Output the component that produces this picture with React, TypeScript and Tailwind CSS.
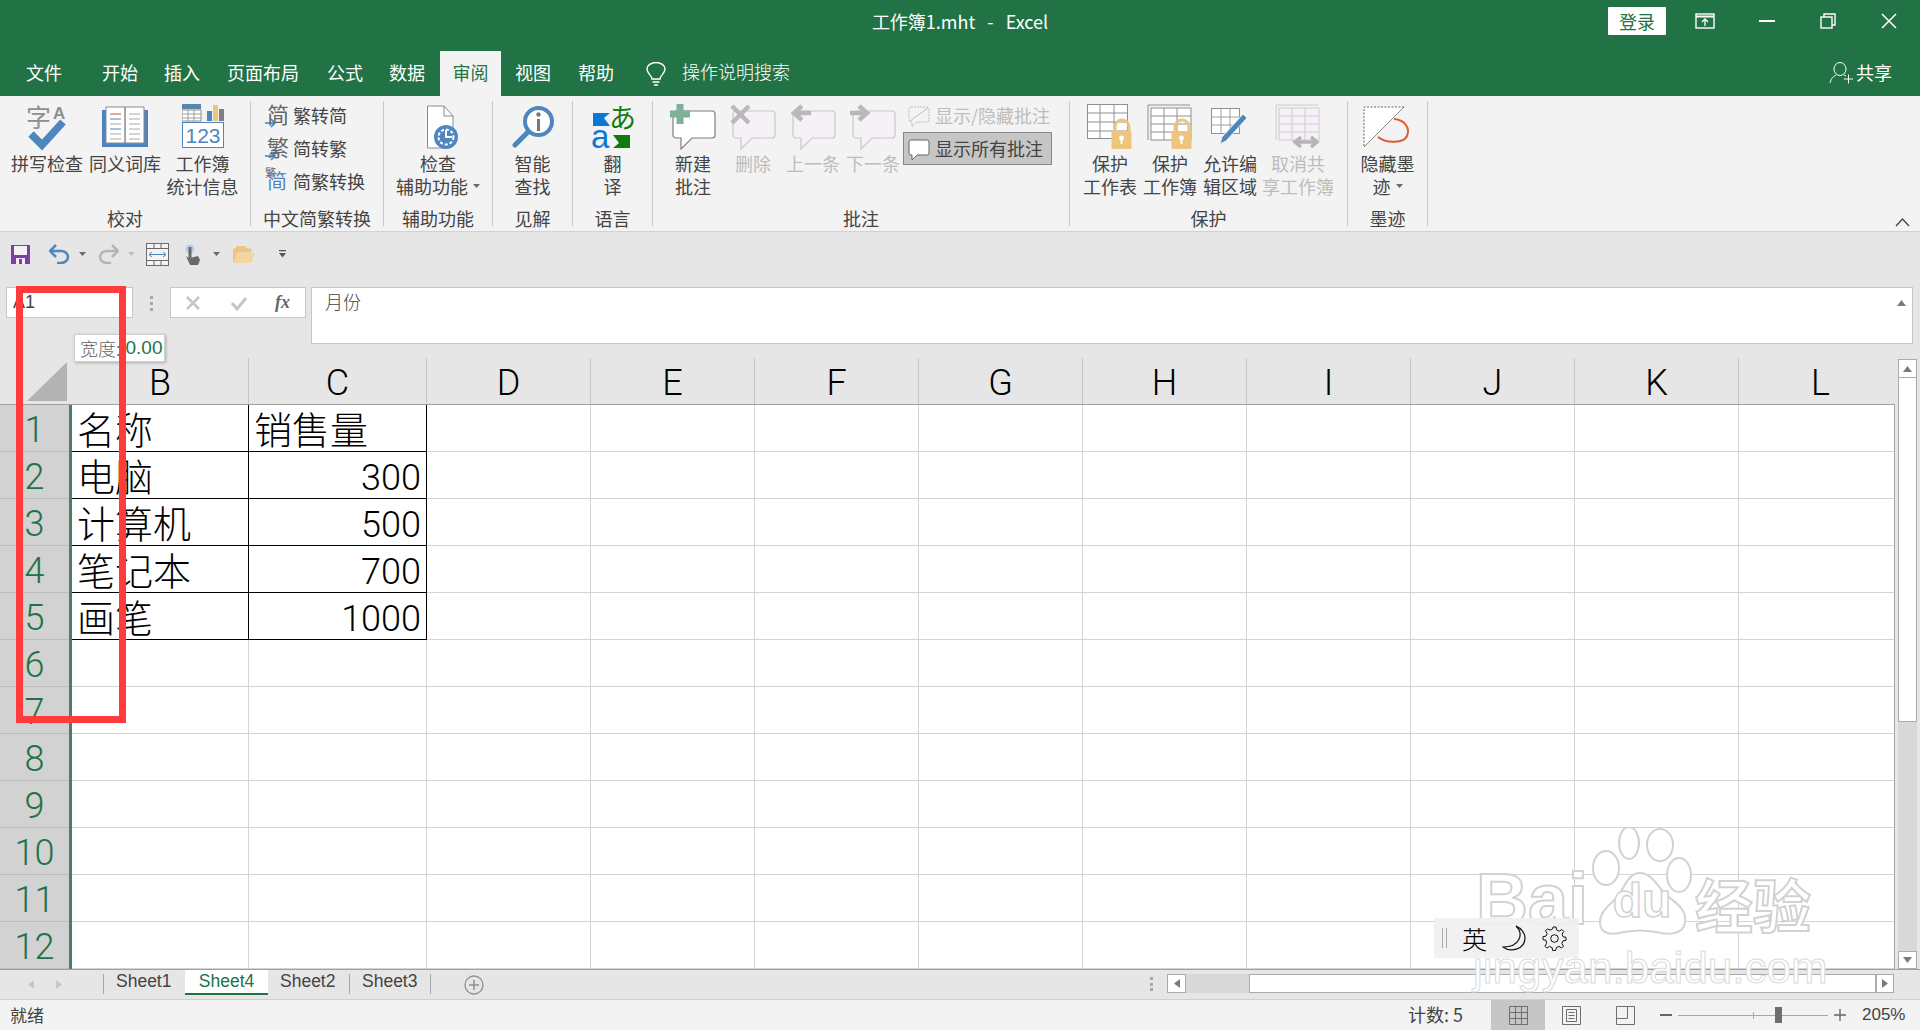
import React from "react";

const Caret = ({ c = "#6a6a6a" }: { c?: string }) => (
  <svg width="7" height="5" viewBox="0 0 7 5" className="shrink-0"><path d="M0 0h7L3.5 4z" fill={c} /></svg>
);

const Sep = () => <div className="w-px h-[125px] bg-[#c8c8c8] shrink-0" />;

function Group({ w, label, children }: { w: string; label: string; children: React.ReactNode }) {
  return (
    <div className={`${w} shrink-0 flex flex-col`}>
      <div className="h-[105px] flex items-start">{children}</div>
      <div className="h-[24px] leading-[24px] text-center text-[18px] text-[#444] whitespace-nowrap">{label}</div>
    </div>
  );
}

function Btn({ cls, icon, lines, off, caret }: { cls: string; icon: React.ReactNode; lines: string[]; off?: boolean; caret?: boolean }) {
  return (
    <div className={`${cls} shrink-0 flex flex-col items-center`}>
      <div className="h-[51px] flex items-center justify-center">{icon}</div>
      {lines.map((l, i) => (
        <div key={i} className={`h-[23px] leading-[23px] text-[18px] whitespace-nowrap flex items-center gap-[5px] ${off ? "text-[#bdbdbd]" : "text-[#444]"}`}>
          {l}
          {caret && i === lines.length - 1 ? <Caret /> : null}
        </div>
      ))}
    </div>
  );
}

const Spell = () => (
  <svg width="42" height="46" viewBox="0 0 42 46" className="overflow-visible">
    <text x="0" y="23" fontSize="25" fill="#8f8f8f" fontFamily="Noto Sans CJK SC">字</text>
    <text x="27" y="15" fontSize="17" fontWeight="700" fill="#8f8f8f" fontFamily="Liberation Sans">A</text>
    <path d="M5 30 L16 41 L37 18" fill="none" stroke="#4e86bd" strokeWidth="7.5" />
  </svg>
);
const Book = () => (
  <svg width="46" height="42" viewBox="0 0 46 42">
    <rect x="0" y="4" width="46" height="37" fill="#4f83bd" />
    <path d="M4 1h19v36H4zM23 1h19v36H23z" fill="#fff" stroke="#8b8b8b" />
    <path d="M8 8h11" stroke="#c9502d" /><path d="M8 13h11M8 23h11" stroke="#4f83bd" /><path d="M8 18h11M8 28h11M8 33h11M27 8h11M27 13h11M27 18h11M27 23h11M27 28h11M27 33h11" stroke="#a8a8a8" />
  </svg>
);
const Stats = () => (
  <svg width="42" height="45" viewBox="0 0 42 45">
    <rect x="0" y="6" width="19" height="11" fill="#fff" stroke="#8f8f8f" />
    <rect x="0" y="0" width="19" height="5" fill="#5b83ad" />
    <path d="M6 6v11M12 6v11M0 10h19M0 14h19" stroke="#9d9d9d" />
    <rect x="25" y="7" width="5" height="10" fill="#4e86bd" /><rect x="31" y="1" width="5" height="16" fill="#eec585" /><rect x="37" y="5" width="5" height="12" fill="#7f7f7f" />
    <rect x="0.5" y="18.5" width="41" height="25" fill="#fff" stroke="#4e86bd" />
    <text x="21" y="39" textAnchor="middle" fontSize="21" fill="#4e86bd" fontFamily="Liberation Sans">123</text>
  </svg>
);
const Conv = ({ a, b }: { a?: string; b: string }) => (
  <svg width="23" height="25" viewBox="0 0 23 25" className="shrink-0 overflow-visible">
    {a ? <text x="0" y="8" fontSize="11" fill="#666" fontFamily="Noto Sans CJK SC">{a}</text> : null}
    <text x="2" y="20" fontSize={a ? 20 : 22} fill={a ? "#4e86bd" : "#666"} fontFamily="Noto Sans CJK SC">{b}</text>
    {a ? null : <path d="M0 20h9M6 16l4 4-4 4" fill="none" stroke="#3f7cc0" strokeWidth="1.6" />}
  </svg>
);
const Check = () => (
  <svg width="42" height="44" viewBox="0 0 42 44">
    <path d="M10.5 1H27l9 10v14H30v18H10.5z" fill="#fff" stroke="#8a8a8a" /><path d="M27 1v10h9" fill="none" stroke="#8a8a8a" />
    <circle cx="29" cy="32" r="12" fill="#4e86bd" />
    <circle cx="29" cy="32" r="7.5" fill="none" stroke="#fff" strokeWidth="2" strokeDasharray="3 2" />
    <path d="M29 25v7l6 0" fill="none" stroke="#fff" strokeWidth="2" />
  </svg>
);
const Lookup = () => (
  <svg width="42" height="42" viewBox="0 0 42 42">
    <circle cx="26.5" cy="15.5" r="13.5" fill="#fff" stroke="#4e86bd" strokeWidth="4" />
    <path d="M16 26L3 39" stroke="#4e86bd" strokeWidth="5" strokeLinecap="round" />
    <circle cx="26.5" cy="8.5" r="2.2" fill="#777" /><rect x="25" y="13" width="3" height="12" fill="#777" />
  </svg>
);
const Translate = () => (
  <svg width="40" height="42" viewBox="0 0 40 42" className="overflow-visible">
    <path d="M0 7h8l9 0-6 5 6 8H0z" fill="#0a78d7" />
    <text x="16" y="22" fontSize="27" fill="#107c10" fontFamily="Noto Sans CJK JP">あ</text>
    <text x="-2" y="42" fontSize="33" fill="#0a78d7" fontFamily="Liberation Sans">a</text>
    <path d="M37 42H20l6-5-6-8h17z" fill="#107c10" />
  </svg>
);
const Bubble = ({ off, children, w = 46 }: { off?: boolean; children?: React.ReactNode; w?: number }) => (
  <svg width={w} height="46" viewBox="0 0 46 46">
    <path d="M6 7h36a3 3 0 0 1 3 3v21a3 3 0 0 1-3 3H22L11 45v-11H6a3 3 0 0 1-3-3V10a3 3 0 0 1 3-3z" fill={off ? "#f5f1f6" : "#fff"} stroke={off ? "#c9c9c9" : "#7f7f7f"} strokeWidth="1.2" />
    {children}
  </svg>
);
const SmallBubble = ({ off }: { off?: boolean }) => (
  <svg width="22" height="24" viewBox="0 0 22 24" className="shrink-0">
    <path d="M3 3h16a2 2 0 0 1 2 2v11a2 2 0 0 1-2 2H9l-5 5v-5H3a2 2 0 0 1-2-2V5a2 2 0 0 1 2-2z" fill={off ? "#f3f3f3" : "#fff"} stroke={off ? "#bdbdbd" : "#666"} strokeDasharray={off ? "2 1" : undefined} />
    {off ? <path d="M2 17L20 4" stroke="#bdbdbd" /> : null}
  </svg>
);
const SheetGrid = ({ lock, two, off }: { lock?: boolean; two?: boolean; off?: boolean }) => {
  const s = off ? "#d0c8d4" : "#8f8f8f";
  return (
    <svg width="46" height="46" viewBox="0 0 46 46">
      {two ? <path d="M1 36V1h42" fill="none" stroke={s} /> : null}
      <rect x={two ? 4 : 0.5} y={two ? 4 : 0.5} width="40" height={two ? 32 : 34} fill={off ? "#f5f1f6" : "#fff"} stroke={s} />
      <path d={two ? "M17 4v32M30 4v32M4 12h40M4 20h40M4 28h40" : "M13 1v34M27 1v34M1 9h40M1 18h40M1 27h40"} stroke={s} fill="none" />
      {lock ? (
        <g>
          <path d="M28 28v-5a7 7 0 0 1 14 0v5" fill="none" stroke="#eec57d" strokeWidth="3" />
          <rect x="24.5" y="27" width="20" height="18" rx="1" fill="#eec57d" />
          <circle cx="34.5" cy="34" r="2.4" fill="#fff" /><rect x="33.6" y="35" width="1.8" height="5" fill="#fff" />
        </g>
      ) : null}
      {off ? <path d="M21 38h20M26 33l-6 5 6 5M36 33l6 5-6 5" fill="none" stroke="#b5b5b5" strokeWidth="3.5" /> : null}
    </svg>
  );
};
const Edit = () => (
  <svg width="38" height="38" viewBox="0 0 38 38">
    <rect x="0.5" y="0.5" width="28" height="25" fill="#fff" stroke="#8f8f8f" />
    <path d="M10 1v25M19 1v25M1 9h28M1 17h28" stroke="#a0a0a0" />
    <path d="M32 6l4 4-21 23-6 3 2-7z" fill="#4e86bd" stroke="#f3f3f3" />
  </svg>
);
const Ink = () => (
  <svg width="50" height="42" viewBox="0 0 50 42">
    <path d="M1 1h40L1 41z" fill="#fff" /><path d="M41 1H1v40" fill="none" stroke="#666" strokeDasharray="2 1.5" />
    <path d="M41 1L1 41" stroke="#8a8a8a" />
    <path d="M31 13c12 1 16 10 13 17-3 7-20 8-29 1" fill="none" stroke="#de5a32" strokeWidth="2" />
  </svg>
);

const tabs: [string, string][] = [
  ["文件", "ml-[26px]"], ["开始", "ml-[40px]"], ["插入", "ml-[26px]"], ["页面布局", "ml-[27px]"], ["公式", "ml-[28px]"], ["数据", "ml-[26px]"],
];

const cols: [string, string][] = [
  ["B", "w-[177px]"], ["C", "w-[178px]"], ["D", "w-[164px]"], ["E", "w-[164px]"], ["F", "w-[164px]"], ["G", "w-[164px]"],
  ["H", "w-[164px]"], ["I", "w-[164px]"], ["J", "w-[164px]"], ["K", "w-[164px]"], ["L", "w-[164px]"],
];
const data: [string, string][] = [["名称", "销售量"], ["电脑", "300"], ["计算机", "500"], ["笔记本", "700"], ["画笔", "1000"]];
const rows = [1, 2, 3, 4, 5, 6, 7, 8, 9, 10, 11, 12];
const numFont = "[font-family:'Roboto','Liberation_Sans',sans-serif] font-light";

export default function App() {
  return (
    <div className="relative w-[1920px] h-[1030px] overflow-hidden flex flex-col bg-[#e6e6e6] [font-family:'Noto_Sans_CJK_SC',sans-serif] text-[#444]">
      {/* Title */}
      <div className="h-[51px] shrink-0 bg-[#217346] flex items-center pb-[9px] text-white">
        <div className="flex-1" />
        <div className="text-[18px] whitespace-pre">工作簿1.mht   -   Excel</div>
        <div className="flex-1 flex items-center justify-end">
          <div className="w-[58px] h-[28px] bg-white rounded-[1px] text-[#217346] text-[18px] leading-[28px] text-center">登录</div>
          <svg className="ml-[29px]" width="20" height="16" viewBox="0 0 20 16"><rect x="1" y="1" width="18" height="14" fill="none" stroke="#fff" strokeWidth="1.4" /><path d="M1 3.5h18" stroke="#fff" strokeWidth="2" /><path d="M10 13V6M7 9l3-3 3 3" fill="none" stroke="#fff" strokeWidth="1.3" /></svg>
          <div className="ml-[44px] w-[16px] h-[2px] bg-white" />
          <svg className="ml-[45px]" width="16" height="16" viewBox="0 0 16 16"><rect x="1" y="4" width="11" height="11" fill="none" stroke="#fff" strokeWidth="1.4" /><path d="M4 4V1h11v11h-3" fill="none" stroke="#fff" strokeWidth="1.4" /></svg>
          <svg className="ml-[45px] mr-[23px]" width="16" height="16" viewBox="0 0 16 16"><path d="M1 1l14 14M15 1L1 15" stroke="#fff" strokeWidth="1.5" /></svg>
        </div>
      </div>
      {/* Tabs */}
      <div className="h-[45px] shrink-0 bg-[#217346] flex text-white text-[18px]">
        {tabs.map(([t, m]) => (
          <div key={t} className={`${m} leading-[43px] whitespace-nowrap`}>{t}</div>
        ))}
        <div className="ml-[15px] w-[61px] bg-[#f3f3f3] text-[#217346] text-center leading-[43px]">审阅</div>
        <div className="ml-[14px] leading-[43px]">视图</div>
        <div className="ml-[27px] leading-[43px]">帮助</div>
        <svg className="ml-[32px] mt-[11px]" width="20" height="24" viewBox="0 0 20 24"><path d="M6 17c0-4-5-5-5-10a9 6.5 0 0 1 18 0c0 5-5 6-5 10z" fill="none" stroke="#fff" strokeWidth="1.4" /><path d="M6.5 20h7M8 23h4" stroke="#fff" strokeWidth="1.5" /></svg>
        <div className="ml-[16px] leading-[41px] font-light">操作说明搜索</div>
        <div className="flex-1" />
        <svg className="mt-[11px]" width="24" height="22" viewBox="0 0 24 22"><ellipse cx="11" cy="7" rx="6" ry="6.5" fill="none" stroke="#fff" /><path d="M1 21c1-5 4-7 6-8M15 13l2 1M15 17h9M19.5 12.500v9" fill="none" stroke="#fff" /></svg>
        <div className="ml-[3px] mr-[28px] leading-[43px]">共享</div>
      </div>
      {/* Ribbon */}
      <div className="h-[136px] shrink-0 bg-[#f3f3f3] border-b border-[#d2d2d2] flex items-start pt-[5px]">
        <Group w="w-[250px]" label="校对">
          <Btn cls="w-[78px] ml-[8px]" icon={<Spell />} lines={["拼写检查"]} />
          <Btn cls="w-[78px]" icon={<Book />} lines={["同义词库"]} />
          <Btn cls="w-[77px]" icon={<Stats />} lines={["工作簿", "统计信息"]} />
        </Group>
        <Sep />
        <Group w="w-[132px]" label="中文简繁转换">
          <div className="pl-[14px] flex flex-col -mt-[2px] text-[18px]">
            <div className="h-[33px] flex items-center gap-[5px]"><Conv b="简" /><span>繁转简</span></div>
            <div className="h-[33px] flex items-center gap-[5px]"><Conv b="繁" /><span>简转繁</span></div>
            <div className="h-[33px] flex items-center gap-[5px]"><Conv a="繁" b="简" /><span>简繁转换</span></div>
          </div>
        </Group>
        <Sep />
        <Group w="w-[108px]" label="辅助功能">
          <Btn cls="w-full" icon={<Check />} lines={["检查", "辅助功能"]} caret />
        </Group>
        <Sep />
        <Group w="w-[79px]" label="见解">
          <Btn cls="w-full" icon={<Lookup />} lines={["智能", "查找"]} />
        </Group>
        <Sep />
        <Group w="w-[79px]" label="语言">
          <Btn cls="w-full" icon={<Translate />} lines={["翻", "译"]} />
        </Group>
        <Sep />
        <Group w="w-[416px]" label="批注">
          <Btn cls="w-[60px] ml-[10px]" icon={<Bubble><path d="M10 0v20M0 10h20" stroke="#7fb09a" strokeWidth="7" /></Bubble>} lines={["新建", "批注"]} />
          <Btn cls="w-[60px]" off icon={<Bubble off><path d="M2 2l17 17M19 2L2 19" stroke="#b9b9b9" strokeWidth="4.500" /></Bubble>} lines={["删除"]} />
          <Btn cls="w-[60px]" off icon={<Bubble off><path d="M21 9H4M12 2L4 9l8 7" fill="none" stroke="#b9b9b9" strokeWidth="4.500" /></Bubble>} lines={["上一条"]} />
          <Btn cls="w-[60px]" off icon={<Bubble off><path d="M0 9h17M9 2l8 7-8 7" fill="none" stroke="#b9b9b9" strokeWidth="4.500" /></Bubble>} lines={["下一条"]} />
          <div className="flex flex-col text-[18px] -mt-[2px]">
            <div className="h-[33px] flex items-center gap-[5px] pl-[5px] text-[#bdbdbd] whitespace-nowrap"><SmallBubble off />显示/隐藏批注</div>
            <div className="h-[33px] w-[149px] bg-[#c6c6c6] border border-[#868686] flex items-center gap-[5px] pl-[4px] whitespace-nowrap"><SmallBubble />显示所有批注</div>
          </div>
        </Group>
        <Sep />
        <Group w="w-[277px]" label="保护">
          <Btn cls="w-[60px] ml-[10px]" icon={<SheetGrid lock />} lines={["保护", "工作表"]} />
          <Btn cls="w-[60px]" icon={<SheetGrid lock two />} lines={["保护", "工作簿"]} />
          <Btn cls="w-[60px]" icon={<Edit />} lines={["允许编", "辑区域"]} />
          <Btn cls="w-[76px]" off icon={<SheetGrid off two />} lines={["取消共", "享工作簿"]} />
        </Group>
        <Sep />
        <Group w="w-[79px]" label="墨迹">
          <Btn cls="w-full" icon={<Ink />} lines={["隐藏墨", "迹"]} caret />
        </Group>
        <Sep />
        <svg className="ml-[467px] mt-[117px]" width="15" height="9" viewBox="0 0 15 9"><path d="M1 8l6.500-7L14 8" fill="none" stroke="#444" strokeWidth="1.3" /></svg>
      </div>
      {/* QAT */}
      <div className="h-[55px] shrink-0 flex items-center pb-[11px]">
        <svg className="ml-[11px]" width="19" height="19" viewBox="0 0 19 19"><path d="M0 0h19v19H0z" fill="#7b3fa8" /><rect x="3" y="1" width="13" height="9" fill="#f5f0f8" /><rect x="5" y="13" width="9" height="6" fill="#f5f0f8" /><rect x="8" y="14" width="3" height="5" fill="#7b3fa8" /></svg>
        <svg className="ml-[19px]" width="21" height="20" viewBox="0 0 21 20"><path d="M7 1L1 7l6 6" fill="none" stroke="#4e86bd" strokeWidth="2.500" /><path d="M2 7h10a7 6 0 0 1 0 12H8" fill="none" stroke="#4e86bd" strokeWidth="2.500" /></svg>
        <div className="ml-[9px]"><Caret /></div>
        <svg className="ml-[12px]" width="21" height="20" viewBox="0 0 21 20"><path d="M14 1l6 6-6 6" fill="none" stroke="#b5b5b5" strokeWidth="2.500" /><path d="M19 7H9a7 6 0 0 0 0 12h4" fill="none" stroke="#b5b5b5" strokeWidth="2.500" /></svg>
        <div className="ml-[9px]"><Caret c="#bdbdbd" /></div>
        <svg className="ml-[11px]" width="23" height="23" viewBox="0 0 23 23"><rect x="0.500" y="0.500" width="22" height="22" fill="#f3f3f3" stroke="#6a6a6a" /><path d="M1 5.500h21M1 17.500h21M8 1v4M15 1v4M8 18v4M15 18v4" stroke="#6a6a6a" /><path d="M3 11.500h17M6 9l-3 2.500L6 14M17 9l3 2.500-3 2.500" fill="none" stroke="#4e86bd" /></svg>
        <svg className="ml-[16px]" width="15" height="21" viewBox="0 0 15 21"><circle cx="5" cy="5" r="4.500" fill="#b6cde6" /><rect x="3.500" y="3" width="3" height="11" fill="#6a6a6a" /><path d="M1 12l3 2h1l8-2 2 4-2 5H5z" fill="#6a6a6a" /></svg>
        <div className="ml-[13px]"><Caret /></div>
        <svg className="ml-[13px]" width="22" height="17" viewBox="0 0 22 17"><path d="M0 17V3h3l1-3h8l1 3h5v3H5z" fill="#eec57d" stroke="#eec57d" /><path d="M0 17l4-10h18l-4 10z" fill="#f2d59f" /></svg>
        <svg className="ml-[24px]" width="7" height="8" viewBox="0 0 7 8"><path d="M0 0h7v1.300H0zM0 3h7L3.500 7.500z" fill="#555" /></svg>
      </div>
      {/* Formula bar */}
      <div className="h-[58px] shrink-0 flex items-start pl-[6px]">
        <div className="w-[127px] h-[31px] bg-white border border-[#c6c6c6] leading-[29px] pl-[6px] text-[18px] text-[#444] [font-family:'Liberation_Sans',sans-serif]">A1</div>
        <div className="ml-[17px] w-[3px] h-[15px] mt-[9px] flex flex-col justify-between">
          <div className="h-[3px] bg-[#a8a8a8]" /><div className="h-[3px] bg-[#a8a8a8]" /><div className="h-[3px] bg-[#a8a8a8]" />
        </div>
        <div className="ml-[17px] w-[136px] h-[31px] bg-white border border-[#c6c6c6] flex items-center">
          <svg className="ml-[14px]" width="16" height="16" viewBox="0 0 16 16"><path d="M2 2l12 12M14 2L2 14" stroke="#c6c6c6" strokeWidth="2.500" /></svg>
          <svg className="ml-[29px]" width="18" height="16" viewBox="0 0 18 16"><path d="M2 8l5 6L16 3" fill="none" stroke="#c6c6c6" strokeWidth="3" /></svg>
          <span className="ml-[27px] text-[18px] italic font-bold text-[#666] [font-family:'Liberation_Serif',serif]">fx</span>
        </div>
        <div className="ml-[5px] w-[1602px] h-[57px] bg-white border border-[#c6c6c6] flex items-start justify-between pl-[13px] pr-[6px]">
          <span className="text-[18px] leading-[26px] font-light">月份</span>
          <svg className="mt-[12px]" width="9" height="6" viewBox="0 0 9 6"><path d="M0 6l4.500-6L9 6z" fill="#7a7a7a" /></svg>
        </div>
      </div>
      <div className="h-[13px] shrink-0" />
      {/* Sheet */}
      <div className="flex-1 min-h-0 flex">
        <div className="w-[1895px] shrink-0 flex flex-col overflow-hidden">
          <div className="h-[47px] shrink-0 flex border-b border-[#9f9f9f] bg-[#e6e6e6]">
            <div className="w-[72px] shrink-0 flex items-end justify-end pr-[5px] pb-[3px]">
              <svg width="40" height="39" viewBox="0 0 40 39"><path d="M40 0v39H0z" fill="#b3b3b3" /></svg>
            </div>
            {cols.map(([c, w]) => (
              <div key={c} className={`${w} shrink-0 border-r border-[#c6c6c6] text-center text-black text-[36px] pt-[5px] leading-[41px] ${numFont}`}>{c}</div>
            ))}
          </div>
          <div className="flex-1 min-h-0 bg-white border-r border-[#a8a8a8] overflow-hidden">
            {rows.map((r) => {
              const d = data[r - 1];
              return (
                <div key={r} className="h-[47px] flex">
                  <div className={`w-[69px] shrink-0 bg-[#d2d2d2] border-b border-[#bdbdbd] text-center text-[#217346] text-[36px] pt-[5px] leading-[41px] ${numFont}`}>{r}</div>
                  <div className="w-[3px] shrink-0 bg-[#4a7f63]" />
                  {cols.map(([c, w], i) => {
                    const black = !!d && i < 2;
                    const blackEdge = black ? "border-black" : "border-[#d4d4d4]";
                    const txt = d && i < 2 ? d[i] : "";
                    const num = /^\d+$/.test(txt);
                    return (
                      <div key={c} className={`${w} shrink-0 border-b border-r ${blackEdge} text-black whitespace-nowrap ${num ? `text-right pr-[5px] text-[36px] pt-[6px] leading-[40px] ${numFont}` : "pl-[5px] text-[38px] leading-[45px] font-light"}`}>{txt}</div>
                    );
                  })}
                </div>
              );
            })}
          </div>
        </div>
        <div className="flex-1 pl-[3px] pr-[3px] flex flex-col pt-[1px]">
          <div className="h-[19px] bg-white border border-[#ababab] flex items-center justify-center"><svg width="9" height="6" viewBox="0 0 9 6"><path d="M0 6l4.500-6L9 6z" fill="#7a7a7a" /></svg></div>
          <div className="h-[344px] bg-white border-x border-b border-[#ababab]" />
          <div className="flex-1 bg-[#d8d8d8]" />
          <div className="h-[18px] bg-white border border-[#ababab] flex items-center justify-center"><svg width="9" height="6" viewBox="0 0 9 6"><path d="M0 0l4.500 6L9 0z" fill="#7a7a7a" /></svg></div>
        </div>
      </div>
      {/* Sheet tabs */}
      <div className="h-[30px] shrink-0 border-t border-[#a0a0a0] flex items-start text-[17.500px] bg-[#e6e6e6] [font-family:'Liberation_Sans',sans-serif]">
        <svg className="ml-[28px] mt-[10px]" width="6" height="9" viewBox="0 0 6 9"><path d="M6 0v9L0 4.500z" fill="#c6c6c6" /></svg>
        <svg className="ml-[22px] mt-[10px]" width="6" height="9" viewBox="0 0 6 9"><path d="M0 0v9l6-4.500z" fill="#c6c6c6" /></svg>
        <div className="ml-[41px] mt-[4px] w-px h-[20px] bg-[#a8a8a8]" />
        <div className="ml-[12px] w-[55px] leading-[22px]">Sheet1</div>
        <div className="ml-[14px] w-[83px] h-[25px] bg-white border-b-2 border-[#217346] text-[#217346] text-center leading-[22px]">Sheet4</div>
        <div className="ml-[12px] w-[55px] leading-[22px]">Sheet2</div>
        <div className="ml-[14px] mt-[4px] w-px h-[20px] bg-[#a8a8a8]" />
        <div className="ml-[12px] w-[56px] leading-[22px]">Sheet3</div>
        <div className="ml-[12px] mt-[4px] w-px h-[20px] bg-[#a8a8a8]" />
        <svg className="ml-[33px] mt-[5px]" width="20" height="20" viewBox="0 0 20 20"><circle cx="10" cy="10" r="9" fill="none" stroke="#8f8f8f" strokeWidth="1.300" /><path d="M10 5v10M5 10h10" stroke="#8f8f8f" strokeWidth="1.500" /></svg>
        <div className="ml-[666px] mt-[7px] w-[3px] h-[14px] flex flex-col justify-between">
          <div className="h-[3px] bg-[#a8a8a8]" /><div className="h-[3px] bg-[#a8a8a8]" /><div className="h-[3px] bg-[#a8a8a8]" />
        </div>
        <div className="ml-[14px] mt-[4px] w-[19px] h-[19px] bg-white border border-[#ababab] flex items-center justify-center"><svg width="6" height="9" viewBox="0 0 6 9"><path d="M6 0v9L0 4.500z" fill="#7a7a7a" /></svg></div>
        <div className="mt-[4px] w-[63px] h-[19px] bg-[#d8d8d8]" />
        <div className="mt-[4px] w-[627px] h-[19px] bg-white border border-[#ababab]" />
        <div className="mt-[4px] w-[18px] h-[19px] bg-white border border-[#ababab] flex items-center justify-center"><svg width="6" height="9" viewBox="0 0 6 9"><path d="M0 0v9l6-4.500z" fill="#7a7a7a" /></svg></div>
      </div>
      {/* Status */}
      <div className="h-[31px] shrink-0 bg-[#f3f3f3] border-t border-[#cfcfcf] flex items-center text-[17px] text-[#444]">
        <div className="ml-[10px] pb-[1px]">就绪</div>
        <div className="ml-[1364px] w-[56px] whitespace-nowrap pb-[1px] text-[18px]">计数: 5</div>
        <div className="ml-[27px] w-[54px] h-full bg-[#c6c6c6] flex items-center justify-center">
          <svg width="19" height="19" viewBox="0 0 19 19"><path d="M.5.500h18v18H.5zM6.500.500v18M12.500.500v18M.5 6.500h18M.5 12.500h18" fill="none" stroke="#6e6e6e" /></svg>
        </div>
        <svg className="ml-[17px]" width="19" height="19" viewBox="0 0 19 19"><path d="M.5.500h18v18H.5zM4.500 3.500h10v12h-10zM6.500 6.500h6M6.500 9.500h6M6.500 12.500h6" fill="none" stroke="#6e6e6e" /></svg>
        <svg className="ml-[35px]" width="19" height="19" viewBox="0 0 19 19"><path d="M.5.500h18v18H.5zM.5 12.500h11v-12" fill="none" stroke="#6e6e6e" /></svg>
        <div className="ml-[25px] w-[12px] h-[2px] bg-[#666]" />
        <div className="ml-[6px] w-[150px] h-px bg-[#a8a8a8] relative">
          <div className="absolute left-[75px] -top-[3px] w-px h-[7px] bg-[#a8a8a8]" />
          <div className="absolute left-[97px] -top-[8px] w-[7px] h-[16px] bg-[#6e6e6e]" />
        </div>
        <svg className="ml-[6px]" width="12" height="12" viewBox="0 0 12 12"><path d="M0 6h12M6 0v12" stroke="#666" strokeWidth="1.300" /></svg>
        <div className="ml-[16px] text-[17px] [font-family:'Liberation_Sans',sans-serif]">205%</div>
      </div>

      {/* Overlays */}
      <div className="absolute left-[74px] top-[334px] w-[91px] h-[28px] bg-white border border-[#d0d0d0] shadow-[1px_1px_3px_rgba(0,0,0,0.25)] flex items-center pl-[5px] text-[18px] whitespace-nowrap">
        <span className="text-[#666] font-light">宽度:</span><span className="ml-[5px] text-[19px] text-[#217346] [font-family:'Liberation_Sans',sans-serif]">0.00</span>
      </div>
      <div className="absolute left-[16px] top-[286px] w-[110px] h-[437px] border-[7px] border-[#ff3b3b]" />
      <div className="absolute left-[1473px] top-[827px] w-[345px] h-[160px] text-white">
        <div className="absolute left-[3px] top-[30px] text-[72px] font-bold leading-[84px] [font-family:'Liberation_Sans',sans-serif] [-webkit-text-stroke:2px_#d2d2d2]">Bai</div>
        <svg className="absolute left-[119px] top-0" width="104" height="110" viewBox="0 0 104 110">
          <g fill="#fff" stroke="#d2d2d2" strokeWidth="2">
            <ellipse cx="14" cy="41" rx="13" ry="17" /><ellipse cx="37" cy="16" rx="10" ry="16" /><ellipse cx="68" cy="18" rx="13" ry="16" /><ellipse cx="87" cy="48" rx="12" ry="17" />
            <path d="M48 46C60 46 66 60 74 68C84 76 95 82 93 96C91 108 76 108 64 105C54 103 42 103 32 105C20 108 8 108 8 95C8 82 22 76 28 66C34 56 38 46 48 46Z" />
          </g>
          <text x="50" y="90" textAnchor="middle" fontSize="48" fontWeight="700" fontFamily="Liberation Sans" fill="#fff" stroke="#d2d2d2" strokeWidth="1.500">du</text>
        </svg>
        <div className="absolute left-[222px] top-[40px] text-[58px] font-bold leading-[72px] whitespace-nowrap [-webkit-text-stroke:2px_#d2d2d2]">经验</div>
        <div className="absolute left-0 top-[116px] text-[44px] leading-[50px] whitespace-nowrap [font-family:'Liberation_Sans',sans-serif] [-webkit-text-stroke:1px_#dadada]">jingyan.baidu.com</div>
      </div>
      <div className="absolute left-[1434px] top-[918px] w-[145px] h-[40px] bg-[#f0f0f0]/90 flex items-center text-black">
        <div className="ml-[8px] w-[5px] h-[20px] border-x border-[#a8a8a8]" />
        <span className="ml-[15px] text-[25px] leading-none font-light">英</span>
        <svg className="ml-[15px]" width="24" height="26" viewBox="0 0 24 26"><path d="M14 1c8 8 4 21-13 21 8 6 22 2 22-9 0-5-4-10-9-12z" fill="none" stroke="#111" strokeWidth="1.200" /></svg>
        <svg className="ml-[16px]" width="25" height="25" viewBox="0 0 25 25"><circle cx="12.500" cy="12.500" r="3.800" fill="none" stroke="#111" /><path d="M11 1h3l.6 3 2.700 1.200 2.500-1.700 2 2-1.700 2.500L21 10.700l3 .6v3l-3 .6-1.200 2.700 1.700 2.500-2 2-2.500-1.700-2.700 1.200-.6 3h-3l-.6-3-2.700-1.200-2.500 1.700-2-2 1.700-2.500L4 14.300l-3-.6v-3l3-.6 1.200-2.700-1.700-2.500 2-2L8 4.100l2.700-1.200z" fill="none" stroke="#111" /></svg>
      </div>
    </div>
  );
}
